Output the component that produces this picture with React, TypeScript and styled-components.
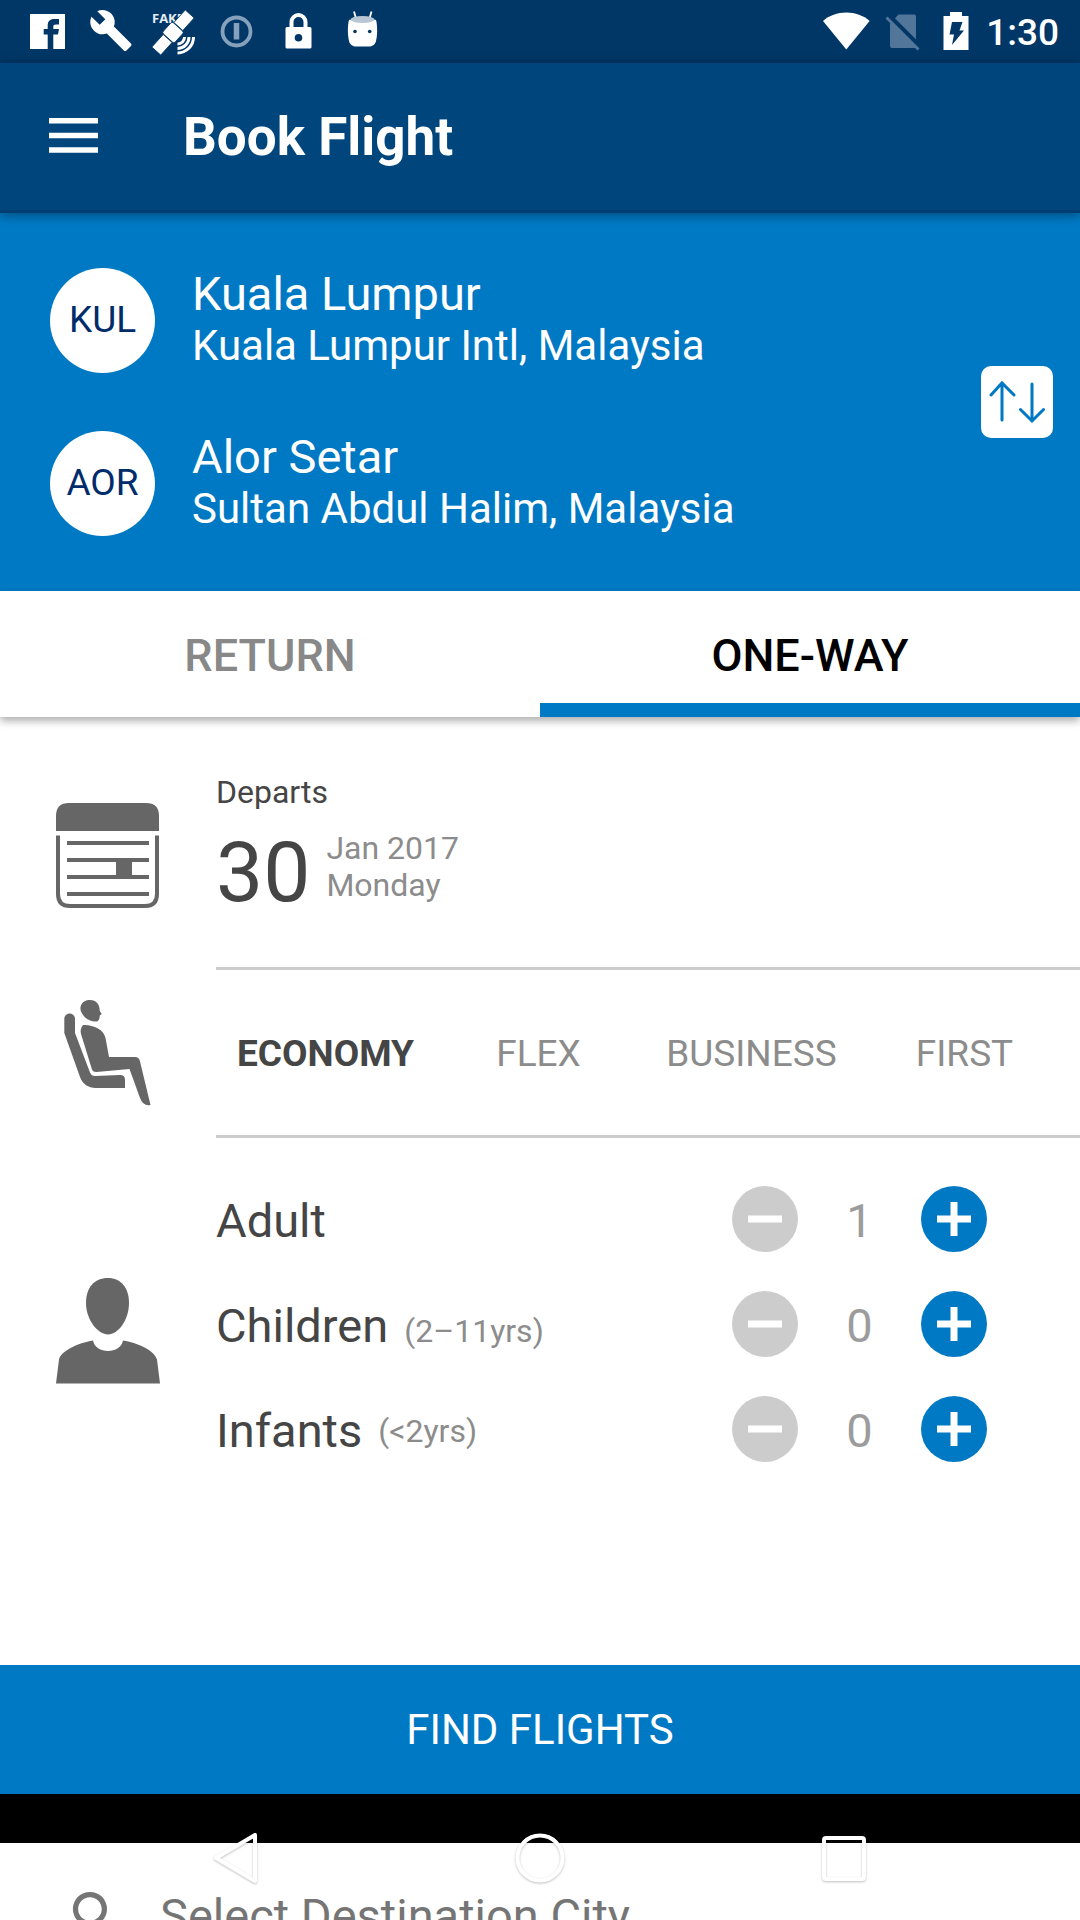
import React, { useState } from "react";
import styled, { createGlobalStyle } from "styled-components";

const color = {
  status: "#003767",
  bar: "#00467c",
  barEdge: "#003d70",
  brand: "#0079c4",
  navy: "#002c6b",
  ink: "#454545",
  muted: "#8c8c8c",
  count: "#9c9c9c",
  icon: "#666666",
  line: "#cccccc",
};

const GlobalStyle = createGlobalStyle`
  * { box-sizing: border-box; }
  body {
    margin: 0;
    background: #fff;
    font-family: Roboto, "Liberation Sans", sans-serif;
    font-size: 32px;
    color: ${color.ink};
  }
  button, input {
    font: inherit;
    color: inherit;
    margin: 0;
    padding: 0;
    border: 0;
    background: none;
  }
  button { cursor: pointer; }
  button:disabled { cursor: default; }
  h1, p { margin: 0; font-weight: 400; }
  svg { display: block; flex: none; }
`;

const Screen = styled.div`
  position: relative;
  display: flex;
  flex-direction: column;
  min-height: 100vh;
  background: #fff;
`;

const StatusBar = styled.div`
  display: flex;
  align-items: center;
  justify-content: space-between;
  height: 63px;
  padding: 0 21px 0 16px;
  background: ${color.status};
  color: #fff;
`;

const StatusGroup = styled.div`
  display: flex;
  align-items: center;
`;

const Clock = styled.time`
  padding-top: 3px;
  font-size: 37px;
  line-height: 44px;
  font-weight: 500;
`;

const AppBar = styled.header`
  position: relative;
  z-index: 1;
  display: flex;
  align-items: center;
  gap: 85px;
  height: 150px;
  padding: 0 49px;
  background: ${color.bar};
  border-bottom: 3px solid ${color.barEdge};
  box-shadow: 0 2px 10px rgba(0, 0, 0, 0.4);
  color: #fff;
`;

const IconButton = styled.button`
  display: flex;
  align-items: center;
  justify-content: center;
`;

const Title = styled.h1`
  && { font-weight: 700; }
  font-size: 53px;
  line-height: 60px;
`;

const Route = styled.section`
  display: flex;
  align-items: center;
  justify-content: space-between;
  padding: 55px 27px 55px 50px;
  background: ${color.brand};
  color: #fff;
`;

const Airports = styled.div`
  display: flex;
  flex-direction: column;
  gap: 58px;
`;

const Airport = styled.button`
  display: flex;
  align-items: center;
  gap: 37px;
  height: 105px;
  text-align: left;
`;

const Code = styled.span`
  display: flex;
  align-items: center;
  justify-content: center;
  width: 105px;
  height: 105px;
  padding-bottom: 2px;
  border-radius: 50%;
  background: #fff;
  color: ${color.navy};
  font-size: 37px;
  line-height: 44px;
`;

const Place = styled.span`
  display: flex;
  flex-direction: column;
  padding-bottom: 3px;
`;

const City = styled.span`
  font-size: 47px;
  line-height: 54px;
`;

const AirportName = styled.span`
  font-size: 42px;
  line-height: 50px;
`;

const SwapButton = styled(IconButton)`
  width: 72px;
  height: 72px;
  border-radius: 10px;
  background: #fff;
`;

const Tabs = styled.div`
  display: grid;
  grid-template-columns: 1fr 1fr;
  height: 126px;
  background: #fff;
  box-shadow: 0 4px 8px rgba(0, 0, 0, 0.32);
`;

const Tab = styled.button<{ $active: boolean }>`
  padding-top: 18px;
  border-bottom: 14px solid ${(p) => (p.$active ? color.brand : "#fff")};
  color: ${(p) => (p.$active ? "#000" : "#888")};
  font-size: 45px;
  line-height: 52px;
  font-weight: 500;
`;

const Form = styled.main`
  flex: 1;
`;

const Section = styled.section`
  display: grid;
  grid-template-columns: 216px 1fr;
`;

const IconCell = styled.div<{ $low?: boolean }>`
  display: flex;
  align-items: center;
  padding: ${(p) => (p.$low ? "24px" : "0")} 0 0 56px;
`;

const DepartButton = styled.button`
  display: block;
  padding: 57px 0 51px;
  border-bottom: 3px solid ${color.line};
  text-align: left;
`;

const DepartLabel = styled.span`
  display: block;
  margin-bottom: 19px;
  font-size: 32px;
  line-height: 37px;
`;

const DateRow = styled.span`
  display: flex;
  gap: 16px;
`;

const Day = styled.span`
  font-size: 84px;
  line-height: 86px;
`;

const MonthAndWeekday = styled.span`
  display: flex;
  flex-direction: column;
  color: ${color.muted};
  font-size: 32px;
  line-height: 37px;
`;

const Cabins = styled.div`
  display: grid;
  grid-template-columns: repeat(4, 1fr);
  align-items: center;
  height: 168px;
  padding: 3px 9px 0 3px;
  border-bottom: 3px solid ${color.line};
`;

const Cabin = styled.button<{ $active: boolean }>`
  color: ${(p) => (p.$active ? color.ink : color.muted)};
  font-size: 37px;
  line-height: 44px;
  font-weight: ${(p) => (p.$active ? 700 : 400)};
`;

const Passengers = styled.div`
  display: flex;
  flex-direction: column;
  gap: 33px;
  padding: 48px 93px 55px 0;
`;

const PassengerRow = styled.div`
  display: flex;
  justify-content: space-between;
  height: 72px;
`;

const PassengerLabel = styled.div<{ $align: "baseline" | "center" }>`
  display: flex;
  align-items: ${(p) => p.$align};
  gap: 16px;
  height: 70px;
  font-size: 47px;
  line-height: 70px;
`;

const Ages = styled.span`
  color: ${color.muted};
  font-size: 32px;
`;

const Counter = styled.div`
  display: grid;
  grid-template-columns: 66px 123px 66px;
`;

const Count = styled.output`
  color: ${color.count};
  font-size: 47px;
  line-height: 70px;
  text-align: center;
`;

const RoundButton = styled(IconButton)`
  width: 66px;
  height: 66px;
  border-radius: 50%;
  background: ${color.brand};
  &:disabled { background: ${color.line}; }
`;

const FindButton = styled.button`
  height: 129px;
  background: ${color.brand};
  color: #fff;
  font-size: 42px;
  line-height: 49px;
`;

const BlackStrip = styled.div`
  height: 49px;
  background: #000;
`;

const SearchPeek = styled.div`
  height: 77px;
  overflow: hidden;
`;

const SearchField = styled.label`
  display: flex;
  align-items: center;
  gap: 32px;
  height: 145px;
  padding: 0 65px;
  color: #757575;
`;

const SearchInput = styled.input`
  flex: 1;
  min-width: 0;
  font-size: 47px;
  line-height: 55px;
  &::placeholder { color: #757575; opacity: 1; }
`;

const SystemNav = styled.nav`
  position: absolute;
  left: 0;
  right: 0;
  bottom: 0;
  display: flex;
  height: 124px;
  padding: 0 84px;
`;

const NavButton = styled(IconButton)`
  flex: 1;
  svg { filter: drop-shadow(0 1px 1px rgba(0, 0, 0, 0.25)); }
`;

const StatusIcons = () => (
  <>
    <svg width="63" height="63" viewBox="0 0 63 63">
      <path d="M14 14h35v35H14z" fill="#fff" />
      <path d="M31.700 49V34.500h-4V29h4v-3.500c0-4.300 2.200-6.500 6.500-6.500H43v5.500h-3c-2 0-2.700.7-2.700 2.500v2H43l-1 5.500h-4.700V49z" fill={color.status} />
    </svg>
    <svg width="63" height="63" viewBox="0 0 63 63">
      <path transform="translate(9.500 8) scale(1.870)" fill="#fff" d="M22.700 19l-9.100-9.100c.9-2.300.4-5-1.500-6.900-2-2-5-2.400-7.400-1.300L9 6 6 9 1.600 4.700C.4 7.100.9 10.100 2.900 12.100c1.900 1.900 4.600 2.400 6.900 1.500l9.100 9.100c.4.4 1 .4 1.400 0l2.300-2.300c.5-.4.5-1.100.1-1.400z" />
    </svg>
    <svg width="63" height="63" viewBox="0 0 63 63">
      <text x="10" y="23" fontSize="13" fontWeight="700" fontFamily="Open Sans, sans-serif" fill="#e6edf4">FAKE</text>
      <g transform="translate(31 32.500) rotate(-48)" fill="#fff" stroke={color.status} strokeWidth="0.800">
        <path d="M8 -6h17v12H8zM-25 -6h17v12h-17z" />
        <rect x="-7.500" y="-8" width="15" height="16" rx="2" />
      </g>
      <g fill="none" stroke="#fff" strokeWidth="3">
        <path d="M42.500 37a7 7 0 0 1-7 7M47 37A11.500 11.500 0 0 1 35.500 48.500M51.500 37a16 16 0 0 1-16 16" />
      </g>
    </svg>
    <svg width="63" height="63" viewBox="0 0 63 63">
      <g fill="none" stroke="#86a1bc">
        <circle cx="31.500" cy="31.500" r="14" strokeWidth="3.800" />
        <path d="M31.500 23v16.500" strokeWidth="5.500" />
      </g>
    </svg>
    <svg width="63" height="63" viewBox="0 0 63 63">
      <path d="M23.500 28v-6a7 7 0 0 1 14 0v6" fill="none" stroke="#fff" strokeWidth="4" />
      <path fillRule="evenodd" fill="#fff" d="M19 27h23q1.500 0 1.500 1.500v18.500q0 1.500-1.500 1.500H19q-1.500 0-1.500-1.500V28.500Q17.500 27 19 27zM30.500 34a3.800 3.800 0 1 0 0 7.600 3.800 3.800 0 0 0 0-7.600z" />
    </svg>
    <svg width="63" height="63" viewBox="0 0 63 63">
      <path d="M23 11.500l2 7M40.500 11.500l-2 7" stroke="#fff" strokeWidth="1.800" />
      <path d="M18 20c3-1 24-1 27 0 1.500 5 1.500 15 0 21-1 4-4 5.500-7 5.500H25c-3 0-6-1.500-7-5.500-1.500-6-1.500-16 0-21z" fill="#fff" />
      <ellipse cx="31.500" cy="19.500" rx="12" ry="3.500" fill="#b9c6d3" />
      <circle cx="24" cy="31.500" r="1.800" fill={color.status} />
      <circle cx="38.700" cy="31.500" r="1.800" fill={color.status} />
    </svg>
  </>
);

const SignalIcons = () => (
  <>
    <svg width="56" height="63" viewBox="0 0 56 63">
      <path d="M28.300 49.500L5 21c6-5.500 14.500-8.500 23.300-8.500S45.600 15.500 51.600 21z" fill="#fff" />
    </svg>
    <svg width="56" height="63" viewBox="0 0 56 63">
      <path d="M24.500 14.500H40q2 0 2 2v30q0 1.500-2 1.500H18q-2 0-2-2V23.500z" fill="#51769a" />
      <path d="M14.500 16L46.500 48" stroke={color.status} strokeWidth="6" />
      <path d="M12.500 17.500L44.500 49.500" stroke="#51769a" strokeWidth="3" />
    </svg>
    <svg width="56" height="63" viewBox="0 0 56 63">
      <path d="M20 12h12v4h6.500v34h-25V16H20z" fill="#fff" />
      <path d="M22 22h10.500l-3 8.500H34L22 45l2-10.500h-4.500z" fill={color.status} />
    </svg>
  </>
);

const MenuIcon = () => (
  <svg width="49" height="37" viewBox="0 0 49 37" fill="#fff">
    <path d="M0 0h49v5.500H0zM0 14.700h49v5.500H0zM0 29.300h49v5.500H0z" />
  </svg>
);

const SwapIcon = () => (
  <svg width="72" height="72" viewBox="0 0 72 72" fill="none" stroke={color.brand} strokeWidth="3" strokeLinecap="round">
    <path d="M21 54V17M10 29l11-12 12 12M51 18v37M39.500 43.500L51 55l11.500-11.500" />
  </svg>
);

const CalendarIcon = () => (
  <svg width="104" height="106" viewBox="0 0 104 106">
    <path d="M0 28V13Q0 0 13 0h77q13 0 13 13v15z" fill={color.icon} />
    <path d="M2 32.500V91q0 12 12 12h75q12 0 12-12V32.500" fill="none" stroke={color.icon} strokeWidth="4" />
    <path d="M11 38h82v4H11zM11 55h82v4H11zM11 72h82v4H11zM11 89h82v4H11zM60 56h16v18H60z" fill={color.icon} />
  </svg>
);

const SeatIcon = () => (
  <svg width="104" height="108" viewBox="0 0 104 108" fill={color.icon}>
    <path d="M24.500 7C26 1.500 30 0 34 0c6.500 0 9.500 4 9.800 11l2 3-2 1.500c-.3 3.500-1 6-3.500 6-5 0-10-2-12.500-5.500-2.500-3-3.800-6-3.300-9z" />
    <path d="M8.300 19c0-7.500 10.700-7.500 10.700 0v14l15 39.500c1 2.500 2.500 3.500 5 3.500l25-1q5 0 5 5v8H39.500c-7 0-13-4-15.500-11L8.300 33z" />
    <path d="M27 25c10-.5 21 4.500 22.500 13L53 57h26c3 0 4.500 1.500 5 4.500L94.500 105c-5 1-8.500-2-10.500-7L73.500 69l-33 3c-3 0-4-1-5-4L25 34c-1-4 0-6 2-9z" />
  </svg>
);

const PersonIcon = () => (
  <svg width="104" height="106" viewBox="0 0 104 106" fill={color.icon}>
    <path d="M52 0c13 0 21 10 21 25 0 17-11 31.500-21 31.500S30 42 30 25C30 10 38 0 52 0z" />
    <path d="M37 62.500c1 6.500 8 10.500 15 10.500s14-4 15-10.500c14 2.500 31 9 34 19l3 24H0l3-24c2-8.500 19-16.500 34-19z" />
  </svg>
);

const cabins = ["ECONOMY", "FLEX", "BUSINESS", "FIRST"];

const passengerTypes = [
  { name: "Adult", ages: "", align: "center" as const, min: 1 },
  { name: "Children", ages: "(2–11yrs)", align: "baseline" as const, min: 0 },
  { name: "Infants", ages: "(<2yrs)", align: "center" as const, min: 0 },
];

export default function App() {
  const [trip, setTrip] = useState("ONE-WAY");
  const [cabin, setCabin] = useState("ECONOMY");
  const [counts, setCounts] = useState([1, 0, 0]);
  const [stops, setStops] = useState([
    { code: "KUL", city: "Kuala Lumpur", airport: "Kuala Lumpur Intl, Malaysia" },
    { code: "AOR", city: "Alor Setar", airport: "Sultan Abdul Halim, Malaysia" },
  ]);

  const change = (index: number, by: number) =>
    setCounts((all) => all.map((n, i) => (i === index ? n + by : n)));

  return (
    <Screen>
      <GlobalStyle />
      <StatusBar>
        <StatusGroup><StatusIcons /></StatusGroup>
        <StatusGroup>
          <SignalIcons />
          <Clock>1:30</Clock>
        </StatusGroup>
      </StatusBar>

      <AppBar>
        <IconButton aria-label="Menu"><MenuIcon /></IconButton>
        <Title>Book Flight</Title>
      </AppBar>

      <Route>
        <Airports>
          {stops.map((s) => (
            <Airport key={s.code}>
              <Code>{s.code}</Code>
              <Place>
                <City>{s.city}</City>
                <AirportName>{s.airport}</AirportName>
              </Place>
            </Airport>
          ))}
        </Airports>
        <SwapButton aria-label="Swap airports" onClick={() => setStops([stops[1], stops[0]])}>
          <SwapIcon />
        </SwapButton>
      </Route>

      <Tabs role="tablist">
        {["RETURN", "ONE-WAY"].map((t) => (
          <Tab key={t} role="tab" aria-selected={trip === t} $active={trip === t} onClick={() => setTrip(t)}>
            {t}
          </Tab>
        ))}
      </Tabs>

      <Form>
        <Section>
          <IconCell $low><CalendarIcon /></IconCell>
          <DepartButton>
            <DepartLabel>Departs</DepartLabel>
            <DateRow>
              <Day>30</Day>
              <MonthAndWeekday>
                <span>Jan 2017</span>
                <span>Monday</span>
              </MonthAndWeekday>
            </DateRow>
          </DepartButton>
        </Section>

        <Section>
          <IconCell><SeatIcon /></IconCell>
          <Cabins>
            {cabins.map((c) => (
              <Cabin key={c} aria-pressed={cabin === c} $active={cabin === c} onClick={() => setCabin(c)}>
                {c}
              </Cabin>
            ))}
          </Cabins>
        </Section>

        <Section>
          <IconCell><PersonIcon /></IconCell>
          <Passengers>
            {passengerTypes.map((p, i) => (
              <PassengerRow key={p.name}>
                <PassengerLabel $align={p.align}>
                  <span>{p.name}</span>
                  {p.ages && <Ages>{p.ages}</Ages>}
                </PassengerLabel>
                <Counter>
                  <RoundButton aria-label={`Fewer: ${p.name}`} disabled={counts[i] <= p.min} onClick={() => change(i, -1)}>
                    <svg width="34" height="34" viewBox="0 0 34 34" fill="#fff"><path d="M0 13.500h34v7H0z" /></svg>
                  </RoundButton>
                  <Count>{counts[i]}</Count>
                  <RoundButton aria-label={`More: ${p.name}`} onClick={() => change(i, 1)}>
                    <svg width="34" height="34" viewBox="0 0 34 34" fill="#fff"><path d="M0 13.500h13.500V0h7v13.500H34v7H20.500V34h-7V20.500H0z" /></svg>
                  </RoundButton>
                </Counter>
              </PassengerRow>
            ))}
          </Passengers>
        </Section>
      </Form>

      <FindButton>FIND FLIGHTS</FindButton>
      <BlackStrip />
      <SearchPeek>
        <SearchField>
          <svg width="63" height="63" viewBox="0 0 24 24" fill="#757575">
            <path d="M15.500 14h-.79l-.28-.27A6.471 6.471 0 0 0 16 9.500 6.500 6.500 0 1 0 9.500 16c1.610 0 3.090-.59 4.230-1.570l.27.28v.79l5 4.990L20.490 19l-4.990-5zm-6 0C7.010 14 5 11.990 5 9.500S7.010 5 9.500 5 14 7.010 14 9.500 11.990 14 9.500 14z" />
          </svg>
          <SearchInput aria-label="Select Destination City" placeholder="Select Destination City" />
        </SearchField>
      </SearchPeek>

      <SystemNav aria-label="System">
        <NavButton aria-label="Back">
          <svg width="52" height="56" viewBox="0 0 52 56" fill="none" stroke="#fff" strokeWidth="4" strokeLinejoin="round">
            <path d="M6 28L45 5v46z" />
          </svg>
        </NavButton>
        <NavButton aria-label="Home">
          <svg width="52" height="56" viewBox="0 0 52 56" fill="none" stroke="#fff" strokeWidth="4">
            <circle cx="26" cy="28" r="22.500" />
          </svg>
        </NavButton>
        <NavButton aria-label="Recent apps">
          <svg width="52" height="56" viewBox="0 0 52 56" fill="none" stroke="#fff" strokeWidth="4">
            <rect x="6" y="8" width="40" height="41" rx="2" />
          </svg>
        </NavButton>
      </SystemNav>
    </Screen>
  );
}
